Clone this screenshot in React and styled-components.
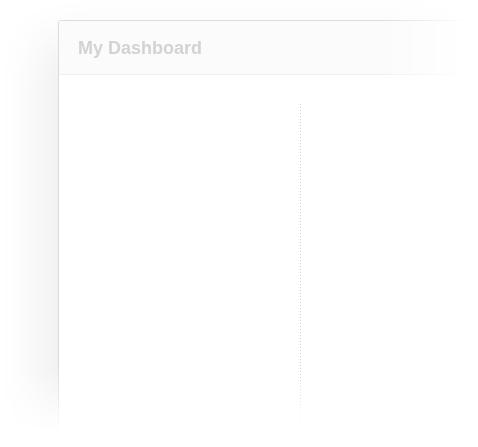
import React from "react";
import styled, { createGlobalStyle } from "styled-components";

const GlobalStyle = createGlobalStyle`
  html, body {
    margin: 0;
    padding: 0;
    background: #fff;
    font-family: "Liberation Sans", Arial, sans-serif;
    overflow: hidden;
  }
`;

const Stage = styled.div`
  width: 478px;
  height: 447px;
  padding: 20px 0 0 58px;
  box-sizing: border-box;
  overflow: hidden;
  -webkit-mask-image: linear-gradient(to right, #000 0, #000 380px, transparent 468px),
    linear-gradient(to bottom, #000 0, #000 370px, transparent 432px);
  -webkit-mask-composite: source-in;
  mask-image: linear-gradient(to right, #000 0, #000 380px, transparent 468px),
    linear-gradient(to bottom, #000 0, #000 370px, transparent 432px);
  mask-composite: intersect;
`;

const Card = styled.div`
  width: 460px;
  height: 460px;
  background: #fff;
  border: 1px solid #dcdcdc;
  border-radius: 3px 3px 0 0;
  box-shadow: -16px 20px 50px rgba(0, 0, 0, 0.07);
  display: flex;
  flex-direction: column;
`;

const Header = styled.header`
  height: 53px;
  display: flex;
  align-items: center;
  padding: 0 19px;
  background: #fbfbfb;
  border-bottom: 1px solid #efefef;
  border-radius: 3px 3px 0 0;
`;

const Title = styled.h1`
  margin: 0;
  font-size: 18px;
  font-weight: bold;
  color: #d3d3d3;
  padding-top: 1px;
`;

const Body = styled.div`
  flex: 1;
  display: flex;
  padding-top: 29px;
`;

const Column = styled.div`
  width: ${(p) => p.width}px;
  background: ${(p) =>
    p.divider
      ? "linear-gradient(to bottom, #cfcfcf 1px, transparent 1px) right top / 1px 3px repeat-y"
      : "none"};
`;

export default function App() {
  return (
    <>
      <GlobalStyle />
      <Stage>
        <Card>
          <Header>
            <Title>My Dashboard</Title>
          </Header>
          <Body>
            <Column width={242} divider />
            <Column width={200} />
          </Body>
        </Card>
      </Stage>
    </>
  );
}
